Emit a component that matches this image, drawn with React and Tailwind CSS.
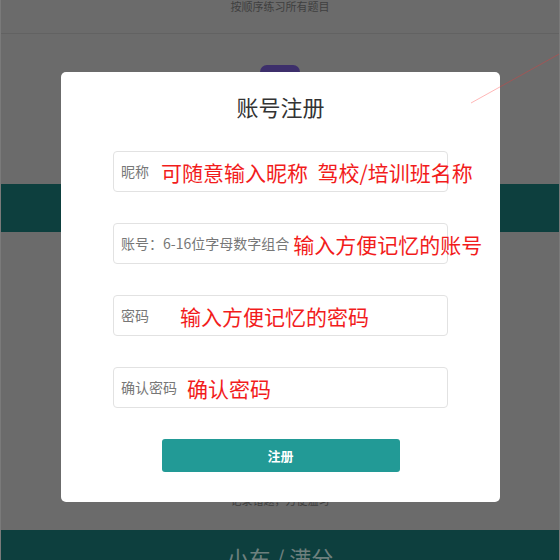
import React from 'react'

const fields = [
  { label: '昵称', note: '可随意输入昵称  驾校/培训班名称', gap: 'ml-[12px]' },
  { label: '账号：6-16位字母数字组合', note: '输入方便记忆的账号', gap: 'ml-[4px]' },
  { label: '密码', note: '输入方便记忆的密码', gap: 'ml-[31px]' },
  { label: '确认密码', note: '确认密码', gap: 'ml-[10px]' },
]

export default function App() {
  return (
    <div
      className="relative w-[560px] h-[560px] overflow-hidden bg-[#6b6b6b] border-x border-[#7a7a7a] flex flex-col"
      style={{ fontFamily: '"Noto Sans CJK SC", "Noto Sans", sans-serif' }}
    >
      {/* page behind the mask */}
      <div className="shrink-0 h-[34px] border-b border-[#626262] text-center text-[11px] leading-[12px] text-[#3f3f3f]">
        按顺序练习所有题目
      </div>
      <div className="shrink-0 flex justify-center mt-[31px]">
        <div className="w-[40px] h-[14px] rounded-full bg-[#3d2f6b]" />
      </div>
      <div className="shrink-0 mt-[105px] h-[48px] bg-[#0d3f3e]" />
      <div className="shrink-0 mt-[262px] text-center text-[11px] leading-[12px] text-[#3f3f3f]">
        记录错题，方便温习
      </div>
      <div className="shrink-0 mt-[24px] h-[40px] bg-[#0d3f3e] flex justify-center pt-[13px]">
        <span className="text-[22px] leading-[28px] text-[#6e807e]">小车 / 满分</span>
      </div>

      {/* modal */}
      <div className="absolute left-[60px] top-[72px] w-[439px] h-[430px] bg-white rounded-[5px] flex flex-col items-center pt-[18px]">
        <h1 className="text-[22px] leading-[32px] text-[#333]">账号注册</h1>
        <div className="mt-[29px] flex flex-col items-center gap-[31px]">
          {fields.map((f) => (
            <div
              key={f.label}
              className="w-[335px] h-[41px] border border-[#e2e2e2] rounded-[4px] flex items-center px-[7px] whitespace-nowrap"
            >
              <span className="text-[14px] text-[#777]">{f.label}</span>
              <span className={`${f.gap} whitespace-pre text-[21px] leading-[24px] text-[#f21c1c]`}>{f.note}</span>
            </div>
          ))}
          <button className="w-[238px] h-[33px] rounded-[3px] bg-[#229a96] text-white text-[13px] font-bold">
            注册
          </button>
        </div>
      </div>

      {/* annotation stroke */}
      <svg className="absolute left-0 top-0" width="560" height="560">
        <line x1="560" y1="53" x2="470" y2="103" stroke="#ff3030" strokeOpacity="0.35" strokeWidth="1" />
      </svg>
    </div>
  )
}
